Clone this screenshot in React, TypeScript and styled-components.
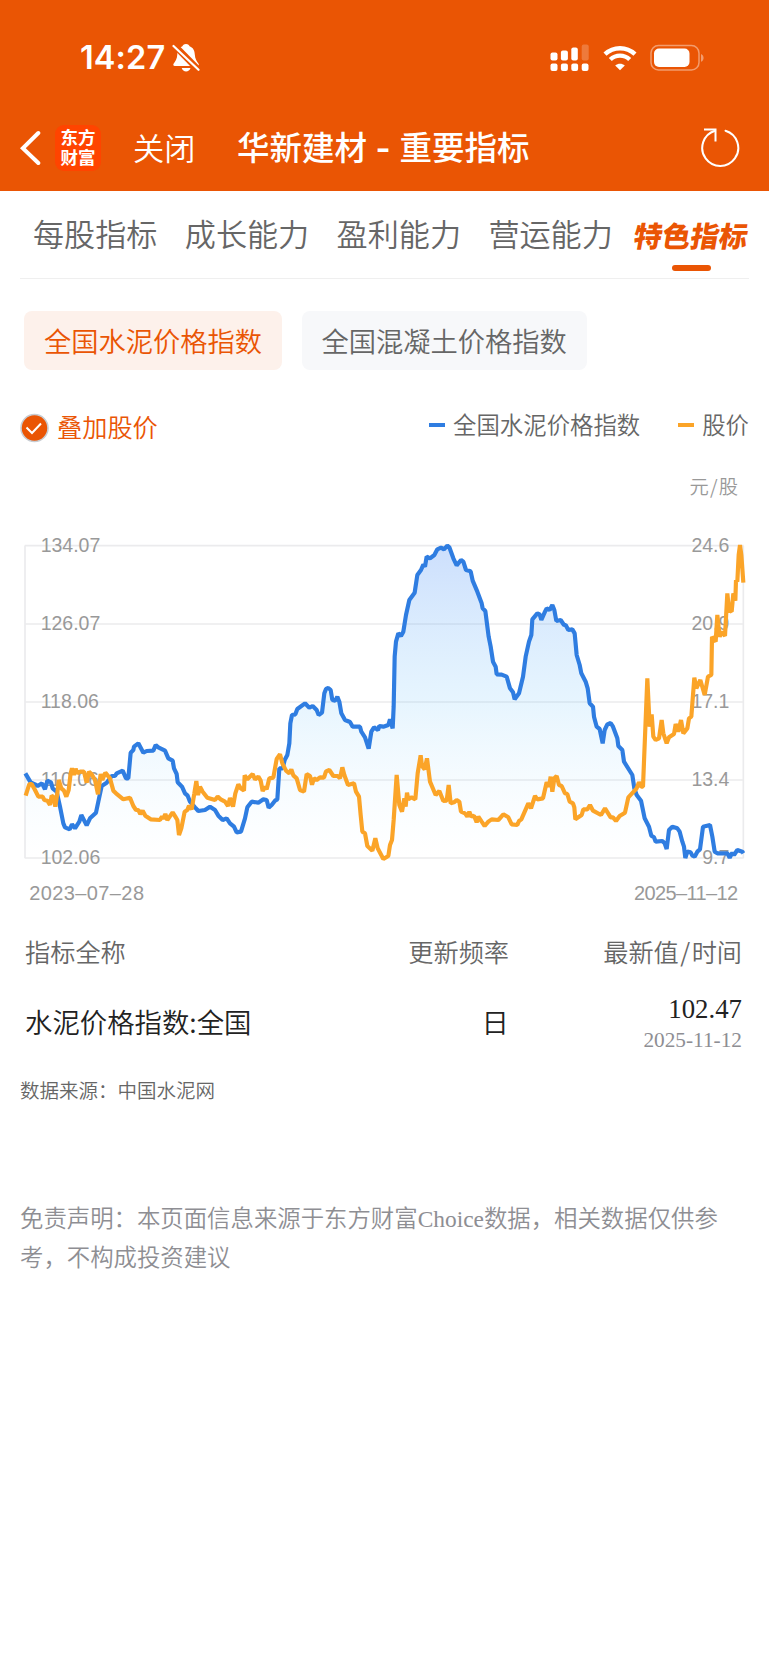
import React from 'react';
import styled, { createGlobalStyle } from 'styled-components';

const ORANGE = '#ea5504';
const CJK = `'Noto Sans CJK SC', sans-serif`;

const GlobalStyle = createGlobalStyle`
  * { box-sizing: border-box; }
  body { margin: 0; background: #fff; }
`;

const Page = styled.div`
  width: 769px;
  height: 1665px;
  overflow: hidden;
  background: #fff;
  font-family: 'Liberation Sans', ${CJK};
  color: #666;
`;

const Header = styled.header`
  height: 191px;
  background: ${ORANGE};
  color: #fff;
`;

const StatusBar = styled.div`
  display: flex;
  align-items: center;
  height: 105px;
  padding: 10px 65px 0 80px;
`;

const Clock = styled.span`
  width: 92px;
  font: 600 32.5px/40px Inter, sans-serif;
  letter-spacing: 0.1px;
`;

const StatusIcons = styled.div`
  display: flex;
  align-items: center;
  margin-left: auto;
`;

const NavBar = styled.nav`
  display: flex;
  align-items: center;
  height: 86px;
  padding: 0 28px 0 20px;
`;

const AppLogo = styled.div`
  width: 46px;
  height: 46px;
  margin-left: 14px;
  padding-top: 2px;
  border-radius: 9px;
  background: #ff4400;
  font: 700 17.5px/20px ${CJK};
  text-align: center;
`;

const CloseButton = styled.span`
  width: 104px;
  margin: -2px 0 0 32px;
  font: 350 31.2px/44px ${CJK};
`;

const Title = styled.h1`
  flex: 1;
  margin: -2px 0 0;
  font: 500 32.5px/44px ${CJK};
  white-space: pre;
`;

const TitleDash = styled.span`
  font-family: Inter, sans-serif;
  font-weight: 600;
  letter-spacing: 0.3px;
`;

const Tabs = styled.div`
  display: flex;
  height: 88px;
  margin: 0 20px;
  padding-left: 13px;
  border-bottom: 1.5px solid #efefef;
`;

const Tab = styled.div`
  width: 151.8px;
  flex: none;
  padding-top: 20px;
  font: 350 31.1px/44px ${CJK};
`;

const ActiveTab = styled.div`
  display: flex;
  flex-direction: column;
  align-items: center;
  flex: none;
  width: 120px;
  margin-left: -9px;
  padding-top: 22px;
  color: ${ORANGE};
  font: 900 28.5px/44px ${CJK};
`;

const SlantedLabel = styled.span`
  transform: skewX(-10deg);
  white-space: nowrap;
`;

const TabIndicator = styled.i`
  width: 39px;
  height: 6px;
  margin-top: 8px;
  border-radius: 3px;
  background: ${ORANGE};
`;

const Chips = styled.div`
  display: flex;
  gap: 19.5px;
  padding: 32px 24px 0;
`;

const Chip = styled.div<{ $active?: boolean }>`
  height: 59px;
  padding: 0 20px;
  border-radius: 8px;
  background: ${p => (p.$active ? '#fdf1eb' : '#f7f8fa')};
  color: ${p => (p.$active ? ORANGE : '#666')};
  font: 350 27.25px/58px ${CJK};
`;

const LegendRow = styled.div`
  display: flex;
  align-items: center;
  height: 40px;
  margin-top: 37px;
  padding: 0 20px;
`;

const Overlay = styled.div`
  display: flex;
  align-items: center;
  gap: 8px;
  margin-right: auto;
  padding-top: 2px;
  color: ${ORANGE};
  font: 350 25.2px/38px ${CJK};
`;

const OverlayLabel = styled.span`
  margin-top: -5px;
`;

const LegendItem = styled.div<{ $color: string }>`
  display: flex;
  align-items: center;
  gap: 8px;
  margin: -6px 0 0 38px;
  font: 350 23.4px/36px ${CJK};
  &::before {
    content: '';
    width: 16px;
    height: 4px;
    margin-top: 2px;
    background: ${p => p.$color};
  }
`;

const Unit = styled.div`
  height: 83px;
  padding: 21px 31px 0 0;
  color: #999;
  font: 350 19.3px/36px ${CJK};
  text-align: right;
`;

const Slash = styled.span`
  margin: 0 0.06em;
`;

const Chart = styled.svg`
  display: block;
  width: 769px;
  height: 390px;
  font-family: 'Liberation Sans', sans-serif;
`;

const TableHead = styled.div`
  display: grid;
  grid-template-columns: 283px 201px 1fr;
  height: 64px;
  padding: 0 27px 0 25px;
  font: 350 25.2px/62px ${CJK};
`;

const TableRow = styled(TableHead)`
  height: 76px;
  color: #222;
  font: 350 27.4px/74px ${CJK};
`;

const Cell = styled.div<{ $end?: boolean }>`
  text-align: ${p => (p.$end ? 'right' : 'left')};
  white-space: nowrap;
`;

const Latest = styled.div`
  display: flex;
  flex-direction: column;
  align-items: flex-end;
  padding-top: 8px;
  font: 400 26.8px/34px 'Liberation Serif', serif;
`;

const LatestDate = styled.span`
  color: #8e8e93;
  font-size: 21.3px;
  line-height: 28px;
`;

const Source = styled.p`
  margin: 16px 20px 0;
  font: 350 19.5px/28px ${CJK};
`;

const Disclaimer = styled.p`
  margin: 96px 20px 0;
  color: #8e8e93;
  font: 350 23.4px/39px 'Liberation Serif', ${CJK};
`;

/* Both series are [x, y] pairs on a 2307 x 1170 drawing grid. */
const INDEX_LINE =
  '76,730 92,757 105,763 113,768 126,760 135,778 142,752 153,757 158,775 170,785 180,830 190,880 195,892 209,898 216,883 225,895 238,875 244,855 260,886 270,865 288,848 295,815 305,768 320,758 335,738 345,738 350,730 368,722 378,745 385,745 392,668 400,660 402,650 415,640 430,668 440,663 460,662 467,645 475,652 495,662 505,685 518,692 522,715 530,732 533,757 546,770 555,790 563,797 570,815 585,832 595,843 615,840 630,830 645,840 655,857 668,870 680,865 690,880 702,890 710,907 723,905 735,865 742,832 755,815 775,818 790,808 800,810 806,833 815,825 825,812 832,808 838,715 848,715 854,690 862,675 868,640 871,580 876,555 886,553 892,537 915,520 928,533 938,528 950,540 956,555 966,548 973,490 978,477 985,474 992,480 997,510 1006,512 1012,500 1018,515 1024,550 1035,570 1050,576 1058,590 1080,590 1084,605 1095,622 1106,656 1114,605 1122,592 1134,600 1138,588 1150,590 1165,585 1170,568 1178,595 1181,530 1184,380 1188,335 1195,310 1203,318 1210,305 1218,255 1228,210 1244,188 1252,135 1263,120 1270,104 1275,110 1280,80 1290,85 1303,75 1312,58 1323,53 1332,58 1342,47 1348,52 1360,85 1370,106 1383,90 1390,95 1398,120 1412,124 1418,152 1432,185 1445,220 1448,235 1456,243 1466,320 1472,350 1479,395 1487,410 1490,433 1505,434 1520,440 1530,475 1539,487 1544,508 1557,490 1569,440 1577,380 1587,335 1594,315 1597,268 1612,250 1619,253 1624,270 1635,245 1640,235 1649,240 1657,225 1663,240 1669,273 1682,270 1692,285 1697,285 1705,300 1717,298 1724,310 1730,375 1739,405 1744,430 1757,455 1763,475 1769,520 1779,530 1782,560 1790,590 1799,597 1808,640 1814,600 1822,583 1832,579 1839,590 1852,625 1855,648 1867,660 1872,695 1897,735 1903,775 1910,795 1923,812 1934,865 1947,890 1954,917 1962,922 1967,935 1987,933 1994,940 2000,957 2007,900 2017,890 2032,895 2039,905 2047,935 2052,950 2056,984 2062,965 2072,967 2077,977 2084,980 2092,965 2100,958 2109,890 2130,885 2137,920 2144,965 2152,970 2182,970 2189,983 2197,968 2202,975 2212,960 2227,965 2230,970';

const PRICE_LINE =
  '77,797 88,762 95,762 105,780 115,800 128,800 133,810 142,812 150,825 155,797 160,800 166,830 172,790 176,750 184,775 192,782 199,800 206,780 212,730 216,715 222,735 227,716 232,730 240,725 252,725 260,758 267,725 275,733 285,750 294,793 302,732 307,750 316,728 330,745 340,782 348,790 370,808 390,803 400,828 408,840 415,840 421,852 428,842 436,857 452,868 480,870 486,860 490,866 496,852 502,870 518,847 526,860 532,870 537,915 544,895 554,845 562,840 567,827 575,838 583,790 589,753 594,795 600,770 608,785 622,803 645,810 653,800 662,808 675,815 684,828 690,804 699,830 706,790 715,763 722,775 732,782 734,736 742,748 758,732 765,748 775,740 782,752 788,783 795,770 800,778 808,745 820,743 825,715 830,687 840,673 847,700 858,722 868,730 874,718 880,736 890,745 900,780 912,785 920,732 930,738 936,764 942,745 950,750 960,742 972,743 978,724 988,720 1000,738 1013,738 1020,745 1027,712 1033,735 1044,765 1062,760 1068,785 1077,800 1082,855 1087,905 1095,910 1102,948 1117,962 1126,925 1133,955 1150,987 1165,978 1170,945 1176,930 1181,870 1190,735 1198,825 1206,845 1213,805 1217,830 1221,788 1225,808 1235,802 1246,808 1253,730 1262,676 1266,708 1274,718 1281,685 1290,755 1307,795 1318,783 1330,813 1340,812 1346,765 1352,820 1362,817 1370,810 1378,815 1383,845 1395,850 1402,860 1408,845 1414,860 1422,857 1430,877 1435,860 1445,875 1454,888 1465,875 1475,868 1495,870 1510,853 1525,862 1535,883 1552,885 1557,873 1564,868 1585,820 1593,835 1605,798 1612,808 1629,805 1640,757 1647,770 1652,740 1657,785 1663,745 1670,738 1677,765 1685,768 1695,790 1702,792 1709,815 1719,820 1723,832 1726,868 1745,855 1750,838 1762,838 1770,825 1779,842 1803,855 1815,835 1832,862 1839,862 1848,873 1859,858 1875,848 1885,802 1910,775 1917,757 1924,770 1929,770 1942,445 1949,590 1955,553 1960,620 1967,630 1977,625 1985,570 1990,610 2000,640 2007,622 2022,612 2027,582 2035,605 2043,570 2050,610 2062,595 2067,565 2074,560 2083,443 2089,475 2101,450 2114,495 2124,440 2134,435 2136,320 2147,335 2152,255 2159,320 2165,305 2175,318 2182,190 2187,240 2195,245 2200,190 2206,212 2208,150 2212,155 2216,75 2220,45 2224,75 2230,158';

const AXIS = [
  { y: 47, left: '134.07', right: '24.6' },
  { y: 282, left: '126.07', right: '20.9' },
  { y: 516, left: '118.06', right: '17.1' },
  { y: 750, left: '110.06', right: '13.4' },
  { y: 984, left: '102.06', right: '9.7' },
];

const TABS = ['每股指标', '成长能力', '盈利能力', '营运能力'];

const MutedBell = () => (
  <svg width="28" height="30" viewBox="0 0 28 30">
    <path
      fill="#fff"
      d="M14 1c-2.200 0-3.200 1.300-3.600 2.200C6.500 4.700 5.400 8 5.300 11.500 5.200 16 3 18.500 1.700 20.500c-.900 1.400-.3 2.500 1.100 2.500h22.500c1.400 0 2-1.100 1.100-2.500-1.300-2-3.500-4.500-3.600-9C22.700 8 21.500 4.700 17.600 3.200 17.200 2.300 16.200 1 14 1ZM9.700 25h8.800c-.6 2.300-2.400 3.500-4.400 3.500S10.300 27.300 9.700 25Z"
    />
    <path d="M1 1 27.500 28" stroke={ORANGE} strokeWidth="6.500" />
    <path d="M1.500 3 26.500 26.800" stroke="#fff" strokeWidth="2.200" strokeLinecap="round" />
  </svg>
);

const Signal = () => (
  <svg width="39" height="28" viewBox="0 0 39 28" fill="#fff">
    <rect x="0.500" y="8.500" width="7" height="8" rx="2" />
    <rect x="10.900" y="6.500" width="7" height="10" rx="2" />
    <rect x="21.300" y="3.500" width="6.500" height="13" rx="2" />
    <rect x="31.700" y="0.500" width="7" height="16" rx="2" opacity=".22" />
    <rect x="0.500" y="19.500" width="7" height="7.500" rx="2" />
    <rect x="10.900" y="19.500" width="7" height="7.500" rx="2" />
    <rect x="21.300" y="19.500" width="6.800" height="7.500" rx="2" />
    <rect x="31.700" y="19.500" width="6.800" height="7.500" rx="2" />
  </svg>
);

const StatusIcon = styled.svg`
  margin-left: 13.500px;
`;

const Wifi = () => (
  <StatusIcon width="34" height="26" viewBox="0 0 34 26" fill="none" stroke="#fff" strokeWidth="4.400">
    <path d="M2 9.200C10.500 1.200 23.500 1.200 32 9.200" />
    <path d="M7.300 14.500C12.800 9.300 21.200 9.300 26.700 14.500" />
    <path d="M17 25.300 12.200 20.500C15 18 19 18 21.800 20.500Z" fill="#fff" stroke="none" />
  </StatusIcon>
);

const Battery = () => (
  <StatusIcon width="54" height="28" viewBox="0 0 54 28">
    <rect x="1" y="1.500" width="48" height="24.500" rx="7.500" fill="none" stroke="#fff" strokeWidth="1.500" opacity=".42" />
    <rect x="4" y="4.500" width="35.500" height="18.500" rx="5" fill="#fff" />
    <path d="M51 10c3.400 1.300 3.400 6.500 0 7.800Z" fill="#fff" opacity=".42" />
  </StatusIcon>
);

export default function App() {
  return (
    <Page>
      <GlobalStyle />
      <Header>
        <StatusBar>
          <Clock>14:27</Clock>
          <MutedBell />
          <StatusIcons>
            <Signal />
            <Wifi />
            <Battery />
          </StatusIcons>
        </StatusBar>
        <NavBar>
          <svg width="21" height="36" viewBox="0 0 21 36" fill="none" stroke="#fff" strokeWidth="4" strokeLinecap="round">
            <path d="M18.300 3 2.800 18.200 18.300 33" />
          </svg>
          <AppLogo>
            东方
            <br />
            财富
          </AppLogo>
          <CloseButton>关闭</CloseButton>
          <Title>
            华新建材<TitleDash> - </TitleDash>重要指标
          </Title>
          <svg width="40" height="42" viewBox="0 0 40 42" fill="none" stroke="#fff" strokeWidth="2">
            <path d="M24.500 3.700A18 18 0 1 1 14 3.700" strokeLinecap="round" />
            <path d="M3 2.500H14.500V14.500" />
          </svg>
        </NavBar>
      </Header>

      <Tabs>
        {TABS.map(t => (
          <Tab key={t}>{t}</Tab>
        ))}
        <ActiveTab>
          <SlantedLabel>特色指标</SlantedLabel>
          <TabIndicator />
        </ActiveTab>
      </Tabs>

      <Chips>
        <Chip $active>全国水泥价格指数</Chip>
        <Chip>全国混凝土价格指数</Chip>
      </Chips>

      <LegendRow>
        <Overlay>
          <svg width="29" height="30" viewBox="0 0 29 30">
            <circle cx="14.500" cy="15" r="13.500" fill={ORANGE} stroke="#c8cdd3" strokeWidth="1.600" />
            <path d="M6.500 14.500 12 20 21 10.500" fill="none" stroke="#fff" strokeWidth="2" />
          </svg>
          <OverlayLabel>叠加股价</OverlayLabel>
        </Overlay>
        <LegendItem $color="#2f7de1">全国水泥价格指数</LegendItem>
        <LegendItem $color="#fba428">股价</LegendItem>
      </LegendRow>

      <Unit>
        元<Slash>/</Slash>股
      </Unit>

      <Chart viewBox="0 0 2307 1170">
        <defs>
          <linearGradient id="area" gradientUnits="userSpaceOnUse" x1="0" y1="47" x2="0" y2="984">
            <stop offset="0" stopColor="#4a8cf7" stopOpacity=".28" />
            <stop offset=".5" stopColor="#6fc3fa" stopOpacity=".17" />
            <stop offset="1" stopColor="#b4e6ff" stopOpacity="0" />
          </linearGradient>
        </defs>
        <g stroke="#ebebed" strokeWidth="5" fill="none">
          {AXIS.map(a => (
            <path key={a.y} d={`M74 ${a.y}H2231`} />
          ))}
          <path d="M75 47V984M2230 47V984" />
        </g>
        <g fill="#999" fontSize="58.500">
          {AXIS.map(a => (
            <React.Fragment key={a.y}>
              <text x="122" y={a.y + 18}>{a.left}</text>
              <text x="2188" y={a.y + 18} textAnchor="end">{a.right}</text>
            </React.Fragment>
          ))}
          <text x="88" y="1110" fontSize="60" textLength="344">2023–07–28</text>
          <text x="1902" y="1110" fontSize="60" textLength="312">2025–11–12</text>
        </g>
        <polygon points={`76,984 ${INDEX_LINE} 2230,984`} fill="url(#area)" />
        <g fill="none" strokeWidth="12.500" strokeLinejoin="bevel">
          <polyline points={INDEX_LINE} stroke="#2f7de1" />
          <polyline points={PRICE_LINE} stroke="#fba428" />
        </g>
      </Chart>

      <TableHead>
        <Cell>指标全称</Cell>
        <Cell $end>更新频率</Cell>
        <Cell $end>
          最新值<Slash>/</Slash>时间
        </Cell>
      </TableHead>
      <TableRow>
        <Cell>水泥价格指数:全国</Cell>
        <Cell $end>日</Cell>
        <Latest>
          102.47
          <LatestDate>2025-11-12</LatestDate>
        </Latest>
      </TableRow>

      <Source>数据来源：中国水泥网</Source>
      <Disclaimer>免责声明：本页面信息来源于东方财富Choice数据，相关数据仅供参考，不构成投资建议</Disclaimer>
    </Page>
  );
}
